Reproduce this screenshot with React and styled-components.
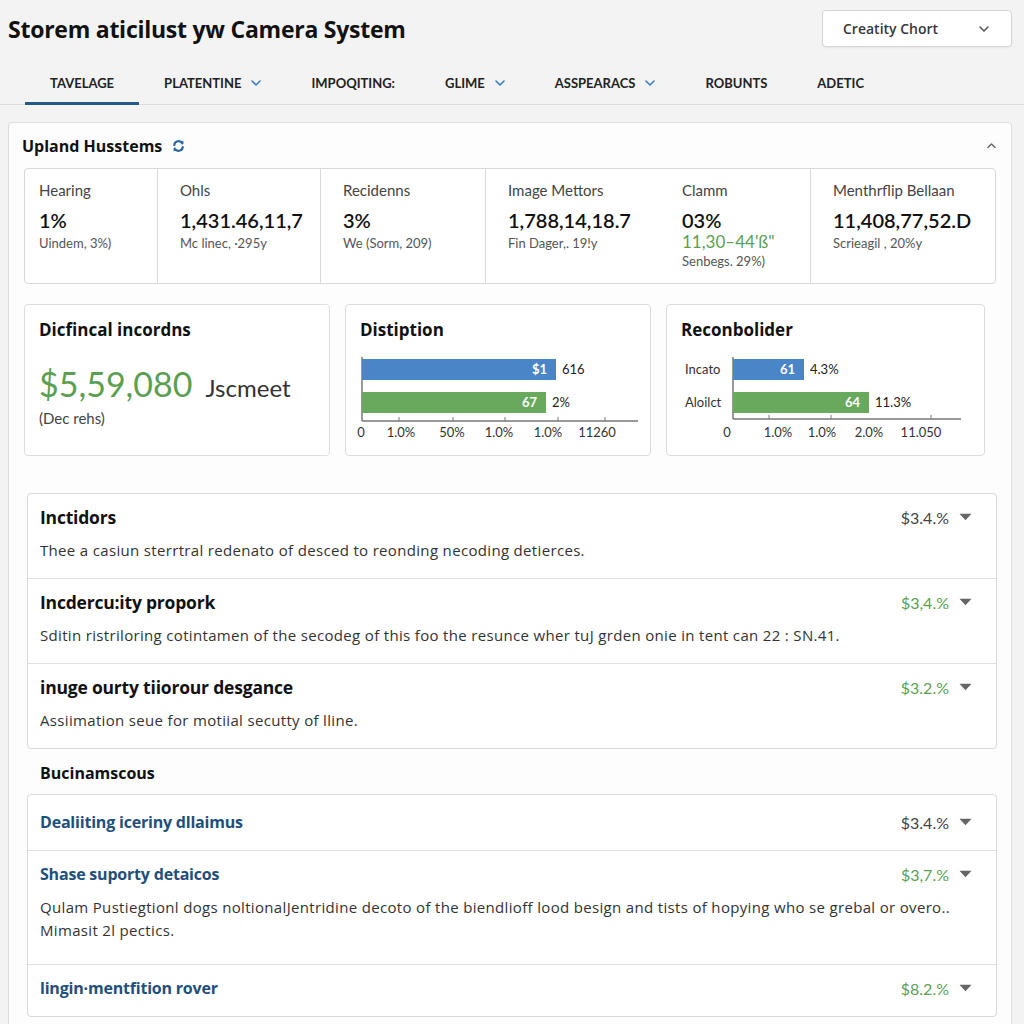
import React from "react";
import styled, { createGlobalStyle } from "styled-components";

const HEAD = `"Open Sans", Lato, sans-serif`;

const GlobalStyle = createGlobalStyle`
  html, body {
    margin: 0;
    padding: 0;
    background: #f3f3f3;
    font-family: Lato, "Open Sans", sans-serif;
    color: #1a1a1a;
  }
  * { box-sizing: border-box; }
`;

const Page = styled.div`
  padding: 0 12px 0 8px;
`;

const Header = styled.header`
  height: 57px;
  display: flex;
  align-items: center;
  justify-content: space-between;
`;

const Title = styled.h1`
  margin: 0;
  font-family: ${HEAD};
  font-size: 23px;
  font-weight: 700;
  color: #111;
  letter-spacing: -0.25px;
`;

const Select = styled.button`
  width: 190px;
  height: 37px;
  background: #fff;
  border: 1px solid #d6d6d6;
  border-radius: 4px;
  display: flex;
  align-items: center;
  justify-content: space-between;
  padding: 0 22px 0 20px;
  font-family: ${HEAD};
  font-size: 14px;
  font-weight: 600;
  color: #383838;
  box-shadow: 0 1px 2px rgba(0, 0, 0, 0.06);
`;

const Nav = styled.nav`
  display: flex;
  margin: 0 -12px 0 -8px;
  padding-left: 25px;
  border-bottom: 1px solid #dcdcdc;
`;

const Tab = styled.div`
  display: flex;
  align-items: center;
  gap: 10px;
  padding: 17px 25px 10px;
  font-size: 13px;
  font-weight: 700;
  line-height: 18px;
  color: #222;
  border-bottom: 3px solid ${({ $active }) => ($active ? "#245a8a" : "transparent")};
  margin-bottom: -1px;
`;

const Panel = styled.section`
  margin-top: 17px;
  background: #fdfdfd;
  border: 1px solid #dedede;
  border-radius: 4px;
  padding: 0 15px 24px;
`;

const PanelHead = styled.div`
  height: 45px;
  display: flex;
  align-items: center;
  justify-content: space-between;
`;

const PanelTitle = styled.h2`
  margin: 0 0 0 -2px;
  font-family: ${HEAD};
  font-size: 16px;
  font-weight: 700;
  color: #111;
  display: flex;
  align-items: center;
  gap: 10px;
`;

const Stats = styled.div`
  display: grid;
  grid-template-columns: 132px 163px 165px 175px 150px 1fr;
  height: 116px;
  background: #fff;
  border: 1px solid #d9d9d9;
  border-radius: 4px;
`;

const Stat = styled.div`
  padding: 11px 8px 0 ${({ $first }) => ($first ? "14px" : "22px")};
  border-left: ${({ $divider }) => ($divider ? "1px solid #dadada" : "none")};
`;

const StatLabel = styled.div`
  font-size: 15px;
  line-height: 20px;
  color: #444;
`;

const StatValue = styled.div`
  margin-top: 7px;
  font-size: 20px;
  line-height: 26px;
  font-weight: 600;
  color: #111;
`;

const StatSub = styled.div`
  line-height: ${({ $tight }) => ($tight ? "18px" : "20px")};
  color: ${({ $green }) => ($green ? "#5c9f52" : "#555")};
  font-size: ${({ $green }) => ($green ? "17px" : "13px")};
`;

const Cards = styled.div`
  display: grid;
  grid-template-columns: 306px 306px 319px;
  column-gap: 15px;
  margin-top: 20px;
`;

const Card = styled.div`
  height: 152px;
  background: #fff;
  border: 1px solid #dcdcdc;
  border-radius: 4px;
  padding: 15px 14px 0;
`;

const CardTitle = styled.h3`
  margin: 0;
  font-family: ${HEAD};
  font-size: 17px;
  line-height: 20px;
  font-weight: 700;
  color: #111;
`;

const Amount = styled.div`
  margin-top: 23px;
  display: flex;
  align-items: baseline;
  gap: 13px;
`;

const Money = styled.span`
  font-size: 34px;
  line-height: 42px;
  color: #5c9f52;
`;

const MoneyUnit = styled.span`
  font-size: 24px;
  color: #333;
`;

const CardNote = styled.div`
  font-size: 15px;
  line-height: 20px;
  color: #444;
  margin-top: 3px;
`;

const ChartSvg = styled.svg`
  display: block;
  margin-top: 11px;
  overflow: visible;
  font-family: Lato, "Open Sans", sans-serif;
`;

const Accordion = styled.div`
  margin: 0 -1px 0 3px;
  background: #fff;
  border: 1px solid #d9d9d9;
  border-radius: 4px;
  margin-top: ${({ $top }) => $top}px;
`;

const Row = styled.div`
  padding: ${({ $pad }) => $pad || "12px 24px 17px 12px"};
  & + & {
    border-top: 1px solid #e0e0e0;
  }
`;

const RowHead = styled.div`
  display: flex;
  align-items: center;
  justify-content: space-between;
  height: 22px;
`;

const RowTitle = styled.div`
  font-family: ${HEAD};
  font-size: ${({ $blue }) => ($blue ? "16px" : "17.5px")};
  font-weight: 700;
  letter-spacing: -0.2px;
  color: ${({ $blue }) => ($blue ? "#1f4f7c" : "#111")};
`;

const RowValue = styled.div`
  display: flex;
  align-items: center;
  gap: 10px;
  font-size: 16px;
  color: ${({ $green }) => ($green ? "#5c9f52" : "#444")};
`;

const RowText = styled.p`
  margin: 11px 0 0;
  font-family: ${HEAD};
  font-size: 15px;
  letter-spacing: 0.33px;
  line-height: ${({ $lh }) => $lh || 22}px;
  color: #333;
`;

const SectionLabel = styled.h3`
  margin: 13px 0 0 16px;
  font-family: ${HEAD};
  font-size: 16px;
  line-height: 22px;
  font-weight: 700;
  color: #111;
`;

const Chevron = ({ color = "#3a7cc2", size = 10, up = false }) => (
  <svg width={size} height={size * 0.6} viewBox="0 0 10 6" fill="none">
    <path
      d={up ? "M1 5 L5 1 L9 5" : "M1 1 L5 5 L9 1"}
      stroke={color}
      strokeWidth="1.6"
      strokeLinecap="round"
      strokeLinejoin="round"
    />
  </svg>
);

const Caret = () => (
  <svg width="13" height="8" viewBox="0 0 13 8">
    <path d="M0.5 0.8 H12.5 L6.5 7.2 Z" fill="#666" />
  </svg>
);

const SyncIcon = () => (
  <svg width="13" height="14" viewBox="0 0 13 14" fill="none">
    <path d="M2.2 6 A4.4 4.4 0 0 1 10.4 4.4" stroke="#2c6aa0" strokeWidth="2.2" strokeLinecap="round" />
    <path d="M8.2 3.6 L11.2 4.6 L11.4 1.4 Z" fill="#2c6aa0" />
    <path d="M10.8 8 A4.4 4.4 0 0 1 2.6 9.6" stroke="#2c6aa0" strokeWidth="2.2" strokeLinecap="round" />
    <path d="M4.8 10.4 L1.8 9.4 L1.6 12.6 Z" fill="#2c6aa0" />
  </svg>
);

const BLUE = "#4a85c7";
const GREEN = "#68a95e";

// chart coordinates are page pixels, ox/oy shift them into the svg
const BarChart = ({ ox, oy, axisX, axisEnd, axisY, bars, ticks, labels }) => {
  const x = (v) => v - ox;
  const y = (v) => v - oy;
  return (
    <ChartSvg width="300" height="92">
      <line x1={x(axisX)} y1={y(358)} x2={x(axisX)} y2={y(axisY)} stroke="#777" strokeWidth="1.5" />
      {bars.map((b) => (
        <g key={b.inside}>
          {b.label && (
            <text x={x(684)} y={y(b.top + 15)} fontSize="13" fill="#333">
              {b.label}
            </text>
          )}
          <rect x={x(axisX)} y={y(b.top)} width={b.end - axisX} height="21" fill={b.color} />
          <text x={x(b.end - 9)} y={y(b.top + 15)} fontSize="13" fontWeight="700" fill="#fff" textAnchor="end">
            {b.inside}
          </text>
          <text x={x(b.end + 6)} y={y(b.top + 15)} fontSize="13" fill="#222">
            {b.after}
          </text>
        </g>
      ))}
      <line x1={x(axisX)} y1={y(axisY)} x2={x(axisEnd)} y2={y(axisY)} stroke="#777" strokeWidth="1.5" />
      {ticks.map((t) => (
        <line key={t} x1={x(t)} y1={y(axisY - 4)} x2={x(t)} y2={y(axisY)} stroke="#777" strokeWidth="1" />
      ))}
      {labels.map(([t, cx], i) => (
        <text key={i} x={x(cx)} y={y(438)} fontSize="13" fill="#333" textAnchor="middle">
          {t}
        </text>
      ))}
    </ChartSvg>
  );
};

const tabs = [
  { name: "TAVELAGE", active: true },
  { name: "PLATENTINE", menu: true },
  { name: "IMPOQITING:" },
  { name: "GLIME", menu: true },
  { name: "ASSPEARACS", menu: true },
  { name: "ROBUNTS" },
  { name: "ADETIC" },
];

const firstList = [
  {
    title: "Inctidors",
    value: "$3.4.%",
    text: "Thee a casiun sterrtral redenato of desced to reonding necoding detierces.",
  },
  {
    title: "Incdercu:ity propork",
    value: "$3,4.%",
    green: true,
    text: "Sditin ristriloring cotintamen of the secodeg of this foo the resunce wher tuJ grden onie in tent can 22 : SN.41.",
  },
  {
    title: "inuge ourty tiiorour desgance",
    value: "$3.2.%",
    green: true,
    text: "Assiimation seue for motiial secutty of lline.",
  },
];

export default function App() {
  return (
    <Page>
      <GlobalStyle />
      <Header>
        <Title>Storem aticilust yw Camera System</Title>
        <Select>
          Creatity Chort
          <Chevron color="#555" size={10} />
        </Select>
      </Header>

      <Nav>
        {tabs.map((t) => (
          <Tab key={t.name} $active={t.active}>
            {t.name}
            {t.menu && <Chevron />}
          </Tab>
        ))}
      </Nav>

      <Panel>
        <PanelHead>
          <PanelTitle>
            Upland Husstems
            <SyncIcon />
          </PanelTitle>
          <Chevron color="#666" size={9} up />
        </PanelHead>

        <Stats>
          <Stat $first>
            <StatLabel>Hearing</StatLabel>
            <StatValue>1%</StatValue>
            <StatSub>Uindem, 3%)</StatSub>
          </Stat>
          <Stat $divider>
            <StatLabel>Ohls</StatLabel>
            <StatValue>1,431.46,11,7</StatValue>
            <StatSub>Mc linec, ·295y</StatSub>
          </Stat>
          <Stat $divider>
            <StatLabel>Recidenns</StatLabel>
            <StatValue>3%</StatValue>
            <StatSub>We (Sorm, 209)</StatSub>
          </Stat>
          <Stat $divider>
            <StatLabel>Image Mettors</StatLabel>
            <StatValue>1,788,14,18.7</StatValue>
            <StatSub>Fin Dager,. 19!y</StatSub>
          </Stat>
          <Stat>
            <StatLabel>Clamm</StatLabel>
            <StatValue>03%</StatValue>
            <StatSub $green $tight>11,30–44'ß"</StatSub>
            <StatSub>Senbegs. 29%)</StatSub>
          </Stat>
          <Stat $divider>
            <StatLabel>Menthrflip Bellaan</StatLabel>
            <StatValue>11,408,77,52.D</StatValue>
            <StatSub>Scrieagil , 20%y</StatSub>
          </Stat>
        </Stats>

        <Cards>
          <Card>
            <CardTitle>Dicfincal incordns</CardTitle>
            <Amount>
              <Money>$5,59,080</Money>
              <MoneyUnit>Jscmeet</MoneyUnit>
            </Amount>
            <CardNote>(Dec rehs)</CardNote>
          </Card>
          <Card>
            <CardTitle>Distiption</CardTitle>
            <BarChart
              ox={359}
              oy={352}
              axisX={361}
              axisEnd={637}
              axisY={422}
              bars={[
                { top: 360, end: 555, color: BLUE, inside: "$1", after: "616" },
                { top: 393, end: 545, color: GREEN, inside: "67", after: "2%" },
              ]}
              ticks={[398, 452, 504, 557, 604]}
              labels={[
                ["0", 360],
                ["1.0%", 400],
                ["50%", 451],
                ["1.0%", 498],
                ["1.0%", 547],
                ["11260", 596],
              ]}
            />
          </Card>
          <Card>
            <CardTitle>Reconbolider</CardTitle>
            <BarChart
              ox={680}
              oy={352}
              axisX={732}
              axisEnd={960}
              axisY={420}
              bars={[
                { top: 360, end: 803, color: BLUE, inside: "61", after: "4.3%", label: "Incato" },
                { top: 393, end: 868, color: GREEN, inside: "64", after: "11.3%", label: "Aloilct" },
              ]}
              ticks={[768, 830, 930]}
              labels={[
                ["0", 726],
                ["1.0%", 777],
                ["1.0%", 821],
                ["2.0%", 868],
                ["11.050", 920],
              ]}
            />
          </Card>
        </Cards>

        <Accordion $top={37}>
          {firstList.map((r) => (
            <Row key={r.title}>
              <RowHead>
                <RowTitle>{r.title}</RowTitle>
                <RowValue $green={r.green}>
                  {r.value}
                  <Caret />
                </RowValue>
              </RowHead>
              <RowText>{r.text}</RowText>
            </Row>
          ))}
        </Accordion>

        <SectionLabel>Bucinamscous</SectionLabel>

        <Accordion $top={10}>
          <Row $pad="16px 24px 17px 12px">
            <RowHead>
              <RowTitle $blue>Dealiiting iceriny dllaimus</RowTitle>
              <RowValue>
                $3.4.%
                <Caret />
              </RowValue>
            </RowHead>
          </Row>
          <Row $pad="12px 24px 22px 12px">
            <RowHead>
              <RowTitle $blue>Shase suporty detaicos</RowTitle>
              <RowValue $green>
                $3,7.%
                <Caret />
              </RowValue>
            </RowHead>
            <RowText $lh={23}>
              Qulam Pustiegtionl dogs noltionalJentridine decoto of the biendlioff lood besign and tists of hopying who se grebal or overo..
              <br />
              Mimasit 2l pectics.
            </RowText>
          </Row>
          <Row $pad="12px 24px 17px 12px">
            <RowHead>
              <RowTitle $blue>lingin·mentfition rover</RowTitle>
              <RowValue $green>
                $8.2.%
                <Caret />
              </RowValue>
            </RowHead>
          </Row>
        </Accordion>
      </Panel>
    </Page>
  );
}
